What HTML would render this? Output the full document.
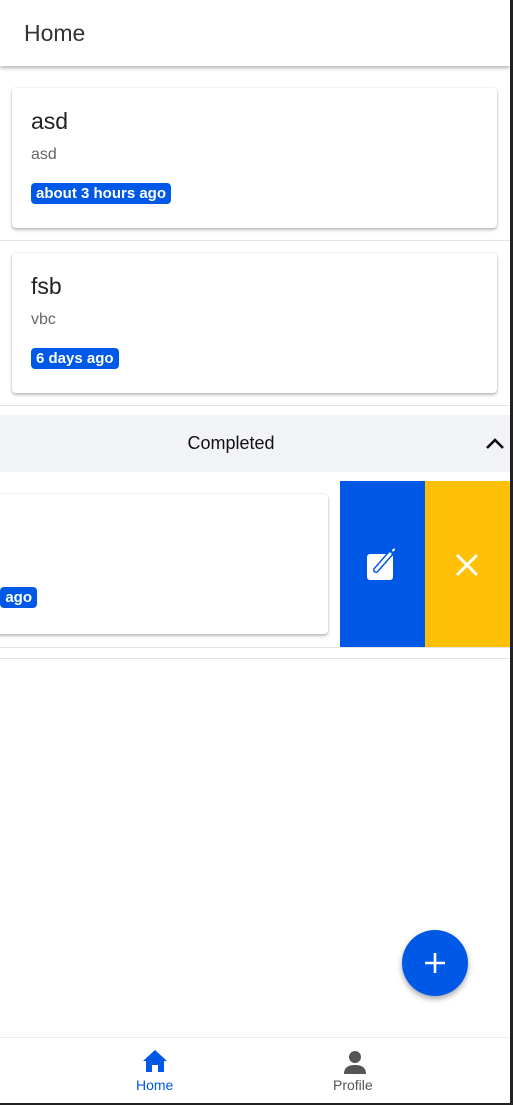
<!DOCTYPE html><html><head><style>
body{margin:0;width:513px;height:1105px;position:relative;overflow:hidden;background:#fff;font-family:"Liberation Sans",sans-serif}
.a{position:absolute}
.card{position:absolute;background:#fff;border-radius:4px;box-shadow:0 2px 3px rgba(0,0,0,.25),0 0 2px rgba(0,0,0,.12)}
.t{position:absolute;left:19px;top:20px;font-size:23px;color:#222}
.s{position:absolute;left:19px;top:58px;font-size:16px;color:#666}
.b{position:absolute;left:19px;top:95px;background:#0058e6;color:#fff;font-weight:bold;font-size:15px;padding:3px 5px;border-radius:4px;line-height:15px}
.ln{position:absolute;left:0;width:510px;height:1px;background:#e4e4e4}
</style></head><body>
<div class="a" style="left:0;top:0;width:510px;height:66px;background:#fff;box-shadow:0 2px 4px rgba(0,0,0,.3);z-index:2"><div class="a" style="left:24px;top:20px;font-size:23px;color:#333">Home</div></div>
<div class="card" style="left:12px;top:88px;width:485px;height:140px"><div class="t">asd</div><div class="s">asd</div><div class="b">about 3 hours ago</div></div>
<div class="ln" style="top:240px"></div>
<div class="card" style="left:12px;top:253px;width:485px;height:140px"><div class="t">fsb</div><div class="s">vbc</div><div class="b">6 days ago</div></div>
<div class="ln" style="top:405px"></div>
<div class="a" style="left:0;top:415px;width:510px;height:57px;background:#f2f3f7"><div class="a" style="left:0;width:462px;top:18px;text-align:center;font-size:18px;color:#111">Completed</div>
<svg class="a" style="left:484px;top:20px" width="22" height="16" viewBox="0 0 22 16"><path d="M3 13L11 5L19 13" stroke="#111" stroke-width="2.6" fill="none"/></svg></div>
<div class="card" style="left:-20px;top:494px;width:348px;height:140px"><div class="b" style="left:auto;right:291px;top:93px">ago</div></div>
<div class="a" style="left:340px;top:481px;width:85px;height:166px;background:#0058e6"></div>
<div class="a" style="left:425px;top:481px;width:85px;height:166px;background:#ffc107"></div>
<svg class="a" style="left:366px;top:548px" width="34" height="34" viewBox="0 0 34 34"><rect x="1" y="6" width="26" height="26" rx="3" fill="#fff"/><path d="M10 22L24 6" stroke="#0058e6" stroke-width="6" stroke-linecap="round"/><path d="M10 22L24 6" stroke="#fff" stroke-width="3" stroke-linecap="round"/><path d="M27 2.5l1-1" stroke="#fff" stroke-width="2" stroke-linecap="round"/></svg>
<svg class="a" style="left:456px;top:554px" width="22" height="22"><path d="M2 2L20 20M20 2L2 20" stroke="#fff" stroke-width="3" stroke-linecap="round"/></svg>
<div class="ln" style="top:647px"></div><div class="ln" style="top:658px"></div>
<div class="a" style="left:402px;top:930px;width:66px;height:66px;border-radius:50%;background:#0058e6;box-shadow:0 3px 6px rgba(0,0,0,.35)"><svg class="a" style="left:21px;top:21px" width="24" height="24"><path d="M12 2V22M2 12H22" stroke="#fff" stroke-width="2.6"/></svg></div>
<div class="a" style="left:0;top:1037px;width:510px;height:1px;background:#eee"></div>
<svg class="a" style="left:142px;top:1049px" width="26" height="24" viewBox="0 0 26 24"><path d="M13 1L1 12H4V23H10V16H16V23H22V12H25Z" fill="#0058e6"/></svg>
<div class="a" style="left:136px;top:1077px;font-size:14px;color:#0058e6">Home</div>
<svg class="a" style="left:343px;top:1050px" width="24" height="24"><circle cx="12" cy="7" r="6" fill="#555"/><path d="M1 24C1 17 6 15 12 15S23 17 23 24Z" fill="#555"/></svg>
<div class="a" style="left:333px;top:1077px;font-size:14px;color:#555">Profile</div>
<div class="a" style="left:510px;top:0;width:3px;height:1105px;background:#222"></div>
<div class="a" style="left:0;top:1103px;width:513px;height:2px;background:#222"></div>
</body></html>
